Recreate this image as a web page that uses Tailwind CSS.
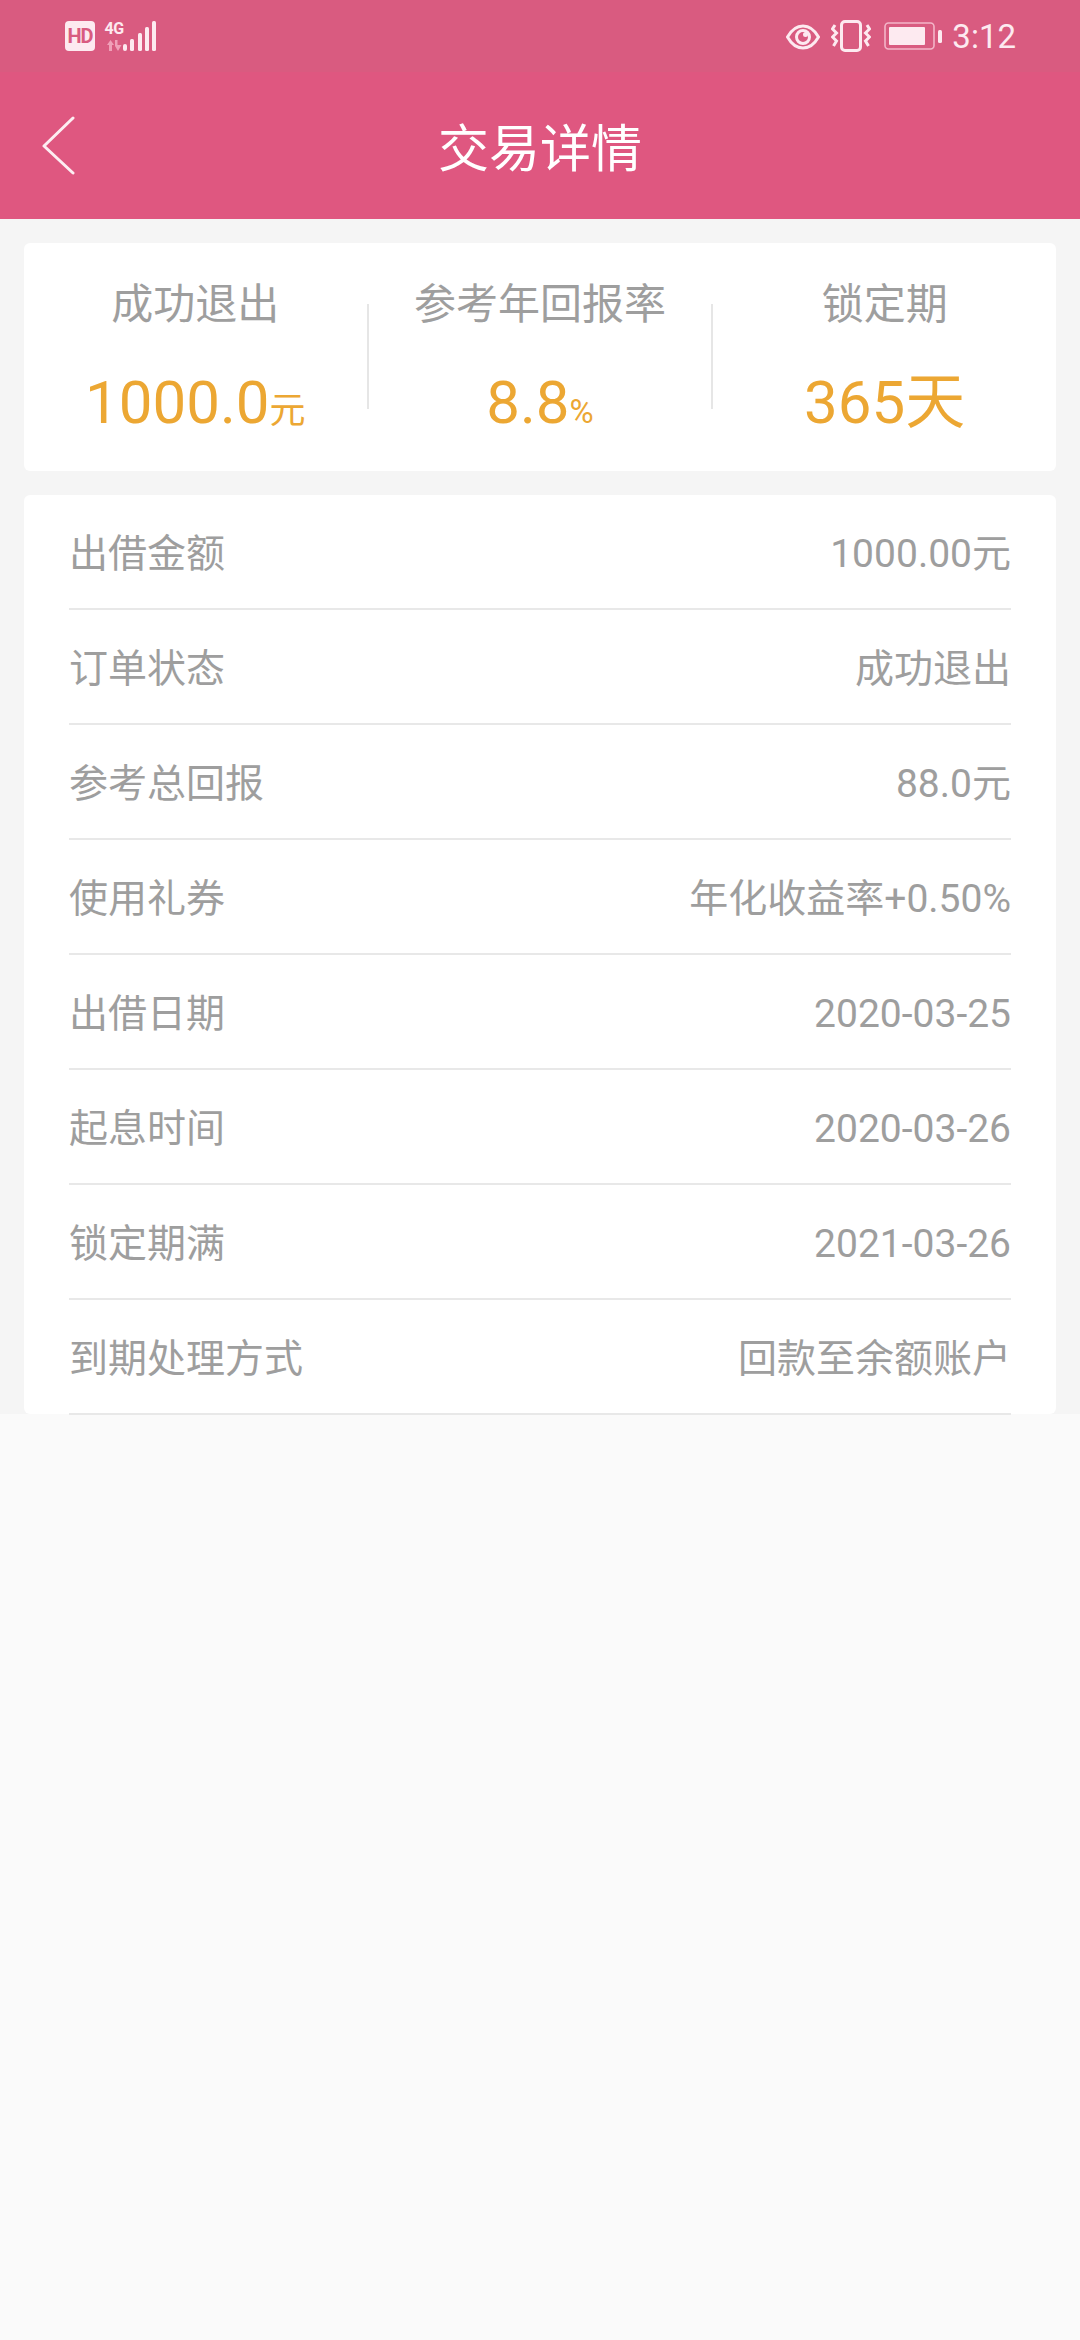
<!DOCTYPE html>
<html lang="zh-CN">
<head>
    <meta charset="UTF-8">
    <meta name="viewport" content="width=device-width, initial-scale=1.0">
    <title>交易详情</title>
    <script src="https://cdn.jsdelivr.net/npm/@tailwindcss/browser@4"></script>
</head>
<body class="bg-[#fafafa] font-['Roboto','Noto_Sans_CJK_SC',sans-serif]">
    <div class="w-[1080px] h-[2340px] overflow-hidden">
        <!-- status bar -->
        <div class="h-[72px] bg-[#d95b80] flex items-center justify-between pl-[65px] pr-[65px] text-[#fdeaf0]">
            <div class="flex items-center">
                <div class="w-[30px] h-[30px] rounded-[4px] bg-[#fdeaf0] text-[#d95b80] text-[20px] leading-[30px] text-center font-bold tracking-[-1px]">HD</div>
                <div class="ml-[10px] w-[18px] h-[30px] flex flex-col items-center">
                    <span class="text-[16px] leading-[16px] font-bold tracking-[-0.5px]">4G</span>
                    <svg width="15" height="11" viewBox="0 0 15 11" class="mt-[3px]"><path d="M3.5 0 L7 5 H5 V11 H2 V5 H0 Z M11 11 L8 6 V0 H10.5 V5 H14.5 Z" fill="#f0a0b8"/></svg>
                </div>
                <svg width="33" height="30" viewBox="0 0 33 30" fill="#fdeaf0">
                    <rect x="0" y="23" width="4" height="7" rx="2"/>
                    <rect x="7" y="18" width="4" height="12" rx="1.5"/>
                    <rect x="15" y="12" width="4" height="18" rx="1.5"/>
                    <rect x="22" y="6" width="4" height="24" rx="1.5"/>
                    <rect x="29" y="0" width="4" height="30" rx="1.5"/>
                </svg>
            </div>
            <div class="flex items-center ml-auto mr-[-1px]">
                <svg width="34" height="26" viewBox="0 0 34 26" fill="none" stroke="#fdeaf0" stroke-width="3" class="mt-[1px]">
                    <path d="M1.5 13 C6 5 11 2 17 2 C23 2 28 5 32.5 13 C28 21 23 24 17 24 C11 24 6 21 1.5 13 Z"/>
                    <circle cx="17" cy="13" r="6.5"/>
                    <circle cx="19.5" cy="10.5" r="2.5" fill="#fdeaf0" stroke="none"/>
                </svg>
                <svg width="40" height="32" viewBox="0 0 40 32" class="ml-[11px] mr-[1px]" fill="none" stroke="#fdeaf0">
                    <rect x="10.5" y="1.5" width="19" height="29" rx="3.5" stroke-width="3"/>
                    <path d="M4 5 L1.5 9 L5.5 13 L1.5 17 L5.5 21 L2.5 26" stroke-width="3"/>
                    <path d="M36 5 L38.5 9 L34.5 13 L38.5 17 L34.5 21 L37.5 26" stroke-width="3"/>
                </svg>
                <svg width="60" height="30" viewBox="0 0 60 30" class="ml-[12px]">
                    <rect x="1" y="2" width="49" height="26" rx="3.5" fill="none" stroke="#f3b5c8" stroke-width="1.6"/>
                    <rect x="5" y="6" width="36" height="18" rx="1" fill="#fdeaf0"/>
                    <rect x="54" y="9" width="4" height="13" rx="1.5" fill="#fdeaf0"/>
                </svg>
                <span class="ml-[8px] text-[33px] leading-none">3:12</span>
            </div>
        </div>

        <!-- toolbar -->
        <header class="relative h-[147px] bg-[#df5780] flex items-center justify-center">
            <svg width="34" height="62" viewBox="0 0 34 62" fill="none" stroke="#fdeef2" stroke-width="3" stroke-linecap="round" stroke-linejoin="round" class="absolute left-[42px] top-[44px]">
                <path d="M31 2 L2 30 L31 57"/>
            </svg>
            <h1 class="text-[51px] leading-none text-white mt-[8px]">交易详情</h1>
        </header>

        <!-- content -->
        <main class="bg-[#f5f5f5] h-[1195px] px-[24px] pt-[24px]">
            <section class="bg-white rounded-[6px] h-[228px] flex text-center">
                <div class="flex-1">
                    <p class="mt-[37px] text-[42px] leading-[50px] text-[#9e9e9e]">成功退出</p>
                    <p class="mt-[39px] text-[60px] leading-[68px] text-[#eca733]">1000.0<span class="text-[36px]">元</span></p>
                </div>
                <div class="w-[2px] h-[105px] mt-[61px] bg-[#e6e6e6]"></div>
                <div class="flex-1">
                    <p class="mt-[37px] text-[42px] leading-[50px] text-[#9e9e9e]">参考年回报率</p>
                    <p class="mt-[39px] text-[60px] leading-[68px] text-[#eca733]">8.8<span class="text-[33px]">%</span></p>
                </div>
                <div class="w-[2px] h-[105px] mt-[61px] bg-[#e6e6e6]"></div>
                <div class="flex-1">
                    <p class="mt-[37px] text-[42px] leading-[50px] text-[#9e9e9e]">锁定期</p>
                    <p class="mt-[39px] text-[60px] leading-[68px] text-[#eca733]">365天</p>
                </div>
            </section>

            <section class="mt-[24px] bg-white rounded-[6px] h-[919px] px-[45px] text-[39px] text-[#9e9e9e]">
                <div class="h-[115px] pt-[5px] border-b-2 border-[#e8e8e8] flex items-center justify-between"><span>出借金额</span><span>1000.00元</span></div>
                <div class="h-[115px] pt-[5px] border-b-2 border-[#e8e8e8] flex items-center justify-between"><span>订单状态</span><span>成功退出</span></div>
                <div class="h-[115px] pt-[5px] border-b-2 border-[#e8e8e8] flex items-center justify-between"><span>参考总回报</span><span>88.0元</span></div>
                <div class="h-[115px] pt-[5px] border-b-2 border-[#e8e8e8] flex items-center justify-between"><span>使用礼券</span><span>年化收益率+0.50%</span></div>
                <div class="h-[115px] pt-[5px] border-b-2 border-[#e8e8e8] flex items-center justify-between"><span>出借日期</span><span>2020-03-25</span></div>
                <div class="h-[115px] pt-[5px] border-b-2 border-[#e8e8e8] flex items-center justify-between"><span>起息时间</span><span>2020-03-26</span></div>
                <div class="h-[115px] pt-[5px] border-b-2 border-[#e8e8e8] flex items-center justify-between"><span>锁定期满</span><span>2021-03-26</span></div>
                <div class="h-[115px] pt-[5px] border-b-2 border-[#e8e8e8] flex items-center justify-between"><span>到期处理方式</span><span>回款至余额账户</span></div>
            </section>
        </main>
    </div>
</body>
</html>
